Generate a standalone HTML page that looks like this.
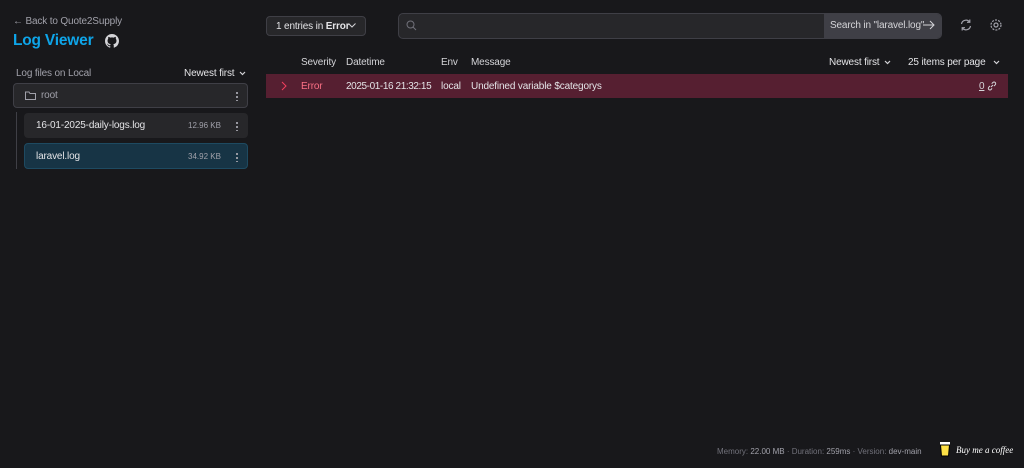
<!DOCTYPE html>
<html><head><style>
*{box-sizing:border-box;margin:0;padding:0}
body{width:1024px;height:468px;background:#18181b;color:#d4d4d8;font-family:"Liberation Sans",sans-serif;font-size:10px;position:relative;overflow:hidden}
.a{position:absolute;white-space:nowrap}
.t{font-size:10px;letter-spacing:-0.15px}
.dots{position:absolute;width:2px;height:10px;background:radial-gradient(circle,#a1a1aa 1px,transparent 1.2px) 0 0/2px 4px repeat-y}
.chev{display:inline-block;vertical-align:middle}
</style></head><body>
<div class="a t" style="left:13px;top:16px;color:#a1a1aa">← Back to Quote2Supply</div>
<div class="a" style="left:13px;top:32px;color:#0ea5e9;font-size:15.5px;font-weight:bold;letter-spacing:-0.2px">Log Viewer</div>
<svg class="a" style="left:105px;top:34px" width="14" height="14" viewBox="0 0 16 16"><path fill="#d4d4d8" d="M8 0C3.58 0 0 3.58 0 8c0 3.54 2.29 6.530 5.47 7.59.4.07.55-.17.55-.38v-1.33c-2.23.48-2.7-1.07-2.7-1.07-.36-.92-.89-1.17-.89-1.17-.73-.5.05-.49.05-.49.8.06 1.23.83 1.23.83.72 1.23 1.88.87 2.34.67.07-.52.28-.87.51-1.07-1.78-.2-3.64-.89-3.640-3.95 0-.87.31-1.59.82-2.15-.08-.2-.36-1.02.08-2.12 0 0 .67-.21 2.2.82a7.6 7.6 0 014 0c1.53-1.04 2.2-.82 2.2-.82.44 1.1.16 1.92.08 2.12.51.56.82 1.27.82 2.15 0 3.07-1.87 3.75-3.65 3.95.29.25.54.73.54 1.48v2.2c0 .21.15.46.55.38A8 8 0 0016 8c0-4.42-3.580-8-8-8z"/></svg>
<div class="a t" style="left:16px;top:68px;color:#a1a1aa">Log files on Local</div>
<div class="a t" style="left:184px;top:68px;color:#e4e4e7">Newest first</div>
<svg class="a" style="left:239px;top:71px" width="7" height="5" viewBox="0 0 7 5"><path d="M1 1l2.5 2.5L6 1" fill="none" stroke="#d4d4d8" stroke-width="1.2"/></svg>
<div class="a" style="left:13px;top:83px;width:235px;height:25px;background:#27272a;border:1px solid #3f3f46;border-radius:4px"></div>
<svg class="a" style="left:25px;top:91px" width="11" height="9" viewBox="0 0 11 9"><path d="M.5 1v7.5h10V2.5H5L4 1z" fill="none" stroke="#a1a1aa"/></svg>
<div class="a t" style="left:41px;top:90px;color:#a1a1aa">root</div>
<div class="dots" style="left:236px;top:91px"></div>
<div class="a" style="left:16px;top:112px;width:1px;height:57px;background:#3f3f46"></div>
<div class="a" style="left:24px;top:113px;width:224px;height:25px;background:#27272a;border-radius:4px"></div>
<div class="a t" style="left:36px;top:120px;color:#e4e4e7">16-01-2025-daily-logs.log</div>
<div class="a" style="left:188px;top:121px;color:#a1a1aa;font-size:8px">12.96 KB</div>
<div class="dots" style="left:236px;top:121px"></div>
<div class="a" style="left:24px;top:143px;width:224px;height:26px;background:#173445;border:1px solid #1e4a61;border-radius:4px"></div>
<div class="a t" style="left:36px;top:151px;color:#e4e4e7">laravel.log</div>
<div class="a" style="left:188px;top:152px;color:#a1a1aa;font-size:8px">34.92 KB</div>
<div class="dots" style="left:236px;top:152px"></div>

<div class="a" style="left:266px;top:16px;width:100px;height:20px;background:#27272a;border:1px solid #3f3f46;border-radius:4px"></div>
<div class="a t" style="left:276px;top:21px;color:#e4e4e7">1 entries in <b>Error</b></div>
<svg class="a" style="left:348px;top:23px" width="8" height="5" viewBox="0 0 8 5"><path d="M.5 .5l3.5 3.5L7.5 .5" fill="none" stroke="#d4d4d8"/></svg>
<div class="a" style="left:398px;top:13px;width:544px;height:26px;background:#27272a;border:1px solid #3f3f46;border-radius:5px"></div>
<svg class="a" style="left:406px;top:20px" width="11" height="11" viewBox="0 0 11 11"><circle cx="4.5" cy="4.5" r="3.5" fill="none" stroke="#71717a"/><path d="M7 7l3 3" stroke="#71717a"/></svg>
<div class="a" style="left:824px;top:14px;width:117px;height:24px;background:#3f3f46;border-radius:0 4px 4px 0"></div>
<div class="a t" style="left:830px;top:20px;color:#d4d4d8">Search in "laravel.log"</div>
<svg class="a" style="left:923px;top:20px" width="12" height="10" viewBox="0 0 12 10"><path d="M0 5h11M7 1l4 4-4 4" fill="none" stroke="#d4d4d8"/></svg>
<svg class="a" style="left:959px;top:18px" width="14" height="14" viewBox="0 0 14 14" fill="none" stroke="#a1a1aa" stroke-width="1.2"><path d="M2.5 6a4.5 4.5 0 018.2-1.8M11.5 8a4.5 4.5 0 01-8.2 1.8M10.8 1.5v2.8H8M3.2 12.5V9.7H6"/></svg>
<svg class="a" style="left:989px;top:18px" width="14" height="14" viewBox="0 0 14 14" fill="none" stroke="#a1a1aa" stroke-width="1.2"><circle cx="7" cy="7" r="2"/><circle cx="7" cy="7" r="5" stroke-dasharray="2 1.2"/></svg>

<div class="a t" style="left:301px;top:57px;color:#d4d4d8">Severity</div>
<div class="a t" style="left:346px;top:57px;color:#d4d4d8">Datetime</div>
<div class="a t" style="left:441px;top:57px;color:#d4d4d8">Env</div>
<div class="a t" style="left:471px;top:57px;color:#d4d4d8">Message</div>
<div class="a t" style="left:829px;top:57px;color:#e4e4e7">Newest first</div>
<svg class="a" style="left:884px;top:60px" width="7" height="5" viewBox="0 0 7 5"><path d="M1 1l2.5 2.5L6 1" fill="none" stroke="#d4d4d8" stroke-width="1.2"/></svg>
<div class="a t" style="left:908px;top:57px;color:#e4e4e7">25 items per page</div>
<svg class="a" style="left:993px;top:60px" width="7" height="5" viewBox="0 0 7 5"><path d="M1 1l2.5 2.5L6 1" fill="none" stroke="#d4d4d8" stroke-width="1.2"/></svg>
<div class="a" style="left:266px;top:74px;width:742px;height:24px;background:#561f31"></div>
<svg class="a" style="left:281px;top:81px" width="6" height="10" viewBox="0 0 6 10"><path d="M1 1l4 4-4 4" fill="none" stroke="#f43f5e"/></svg>
<div class="a t" style="left:301px;top:81px;color:#fb7185">Error</div>
<div class="a t" style="left:346px;top:81px;color:#e4e4e7;letter-spacing:-0.4px">2025-01-16 21:32:15</div>
<div class="a t" style="left:441px;top:81px;color:#e4e4e7">local</div>
<div class="a t" style="left:471px;top:81px;color:#e4e4e7">Undefined variable $categorys</div>
<div class="a t" style="left:979px;top:81px;color:#d4d4d8;text-decoration:underline">0</div>
<svg class="a" style="left:987px;top:81px" width="10" height="10" viewBox="0 0 10 10" fill="none" stroke="#d4d4d8"><path d="M4 6l2-2M3 5L1.8 6.2a1.6 1.6 0 002.3 2.3L5 7.3M7 5l1.2-1.2a1.6 1.6 0 00-2.3-2.3L4.7 2.7"/></svg>

<div class="a" style="left:717px;top:447px;color:#71717a;font-size:8px">Memory: <span style="color:#a1a1aa">22.00 MB</span> · Duration: <span style="color:#a1a1aa">259ms</span> · Version: <span style="color:#a1a1aa">dev-main</span></div>
<svg class="a" style="left:939px;top:441px" width="12" height="16" viewBox="0 0 12 16"><rect x="1" y="1" width="10" height="3" fill="#fff"/><path d="M1.5 4h9l-1 11h-7z" fill="#fde047" stroke="#000"/></svg>
<div class="a" style="left:956px;top:445px;color:#fff;font-size:9px;font-style:italic;font-family:'Liberation Serif',serif">Buy me a coffee</div>
</body></html>
